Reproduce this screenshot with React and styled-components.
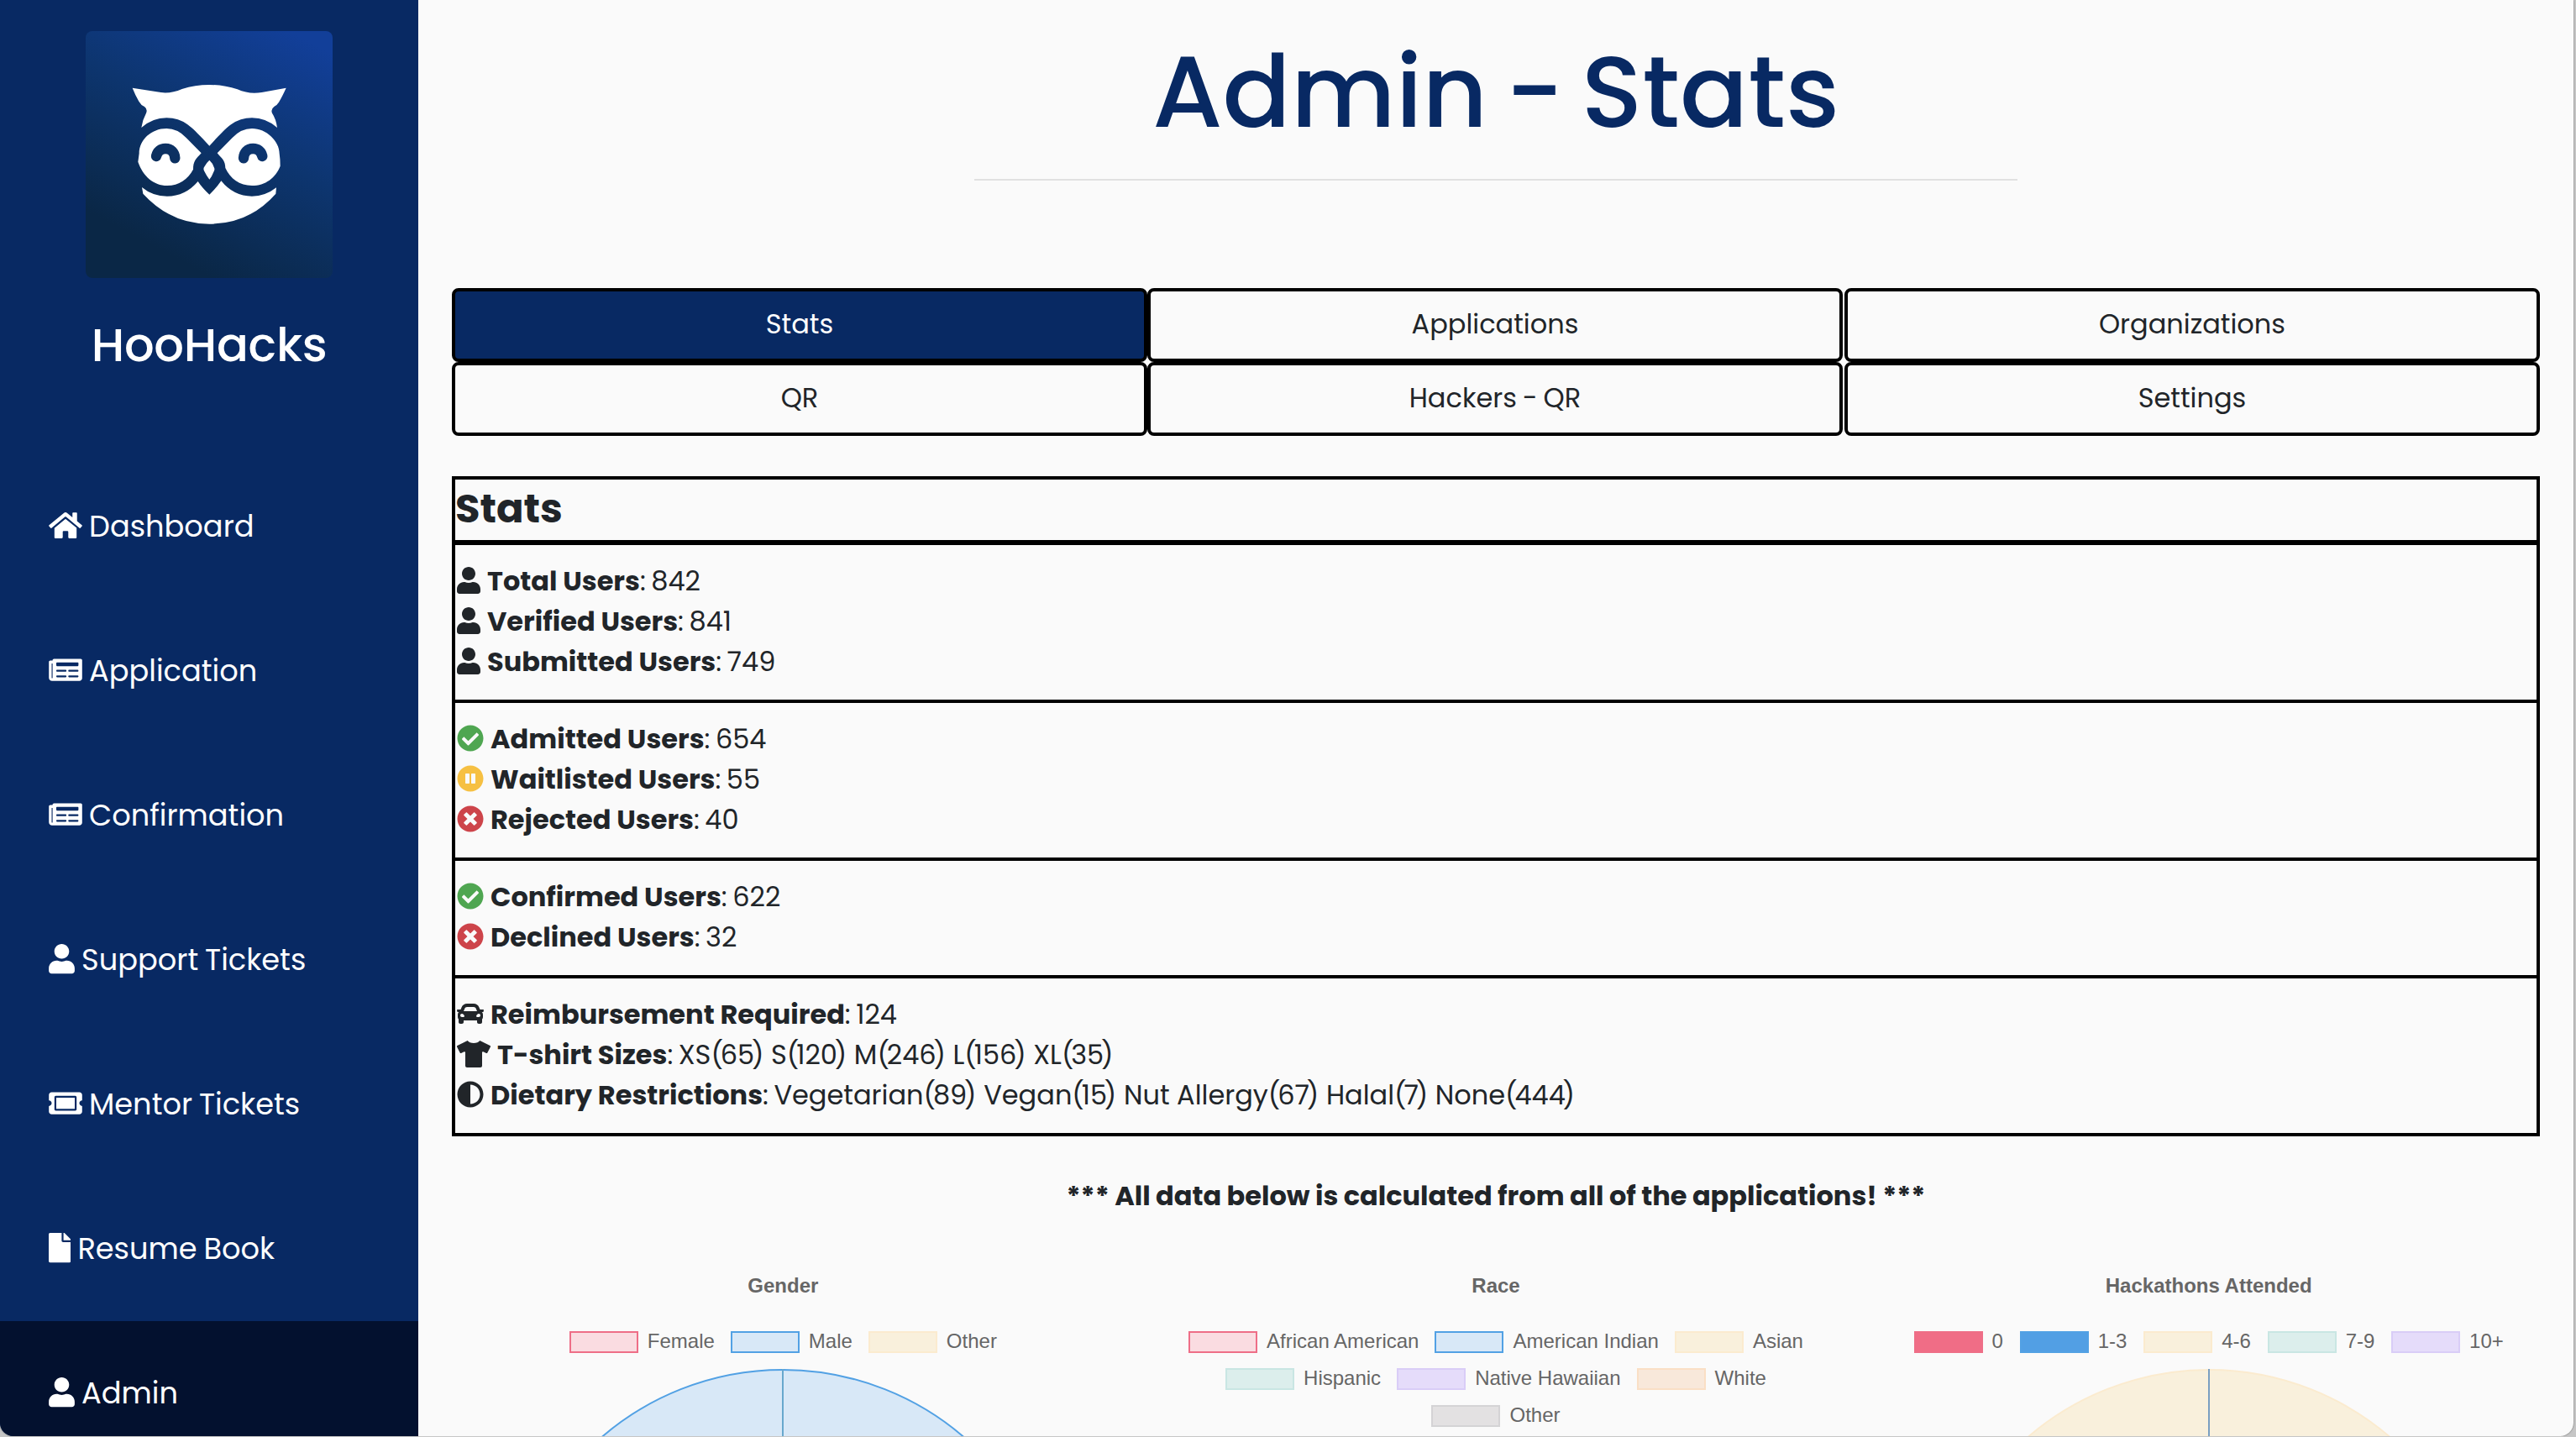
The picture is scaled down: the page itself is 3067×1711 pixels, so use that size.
import React from "react";
import styled, { createGlobalStyle } from "styled-components";
import {
  FaHome,
  FaNewspaper,
  FaUser,
  FaTicketAlt,
  FaFile,
  FaCheckCircle,
  FaPauseCircle,
  FaTimesCircle,
  FaCar,
  FaTshirt,
  FaAdjust,
} from "react-icons/fa";

const NAVY = "#082963";
const INK = "#212529";
const GREEN = "#4fa651";
const AMBER = "#f6c042";
const RED = "#cd444a";

const GlobalStyle = createGlobalStyle`
  *, *::before, *::after { box-sizing: border-box; }
  body {
    margin: 0;
    background: #c6c6c6;
    color: ${INK};
    font-family: Poppins, Inter, sans-serif;
  }
`;

const Window = styled.div`
  display: flex;
  width: 3064px;
  height: 1710px;
  overflow: hidden;
  background: #fafafa;
  border-radius: 0 0 16px 16px;
  box-shadow: 0 0 2px rgba(0, 0, 0, 0.55);
`;

const Sidebar = styled.aside`
  display: flex;
  flex-direction: column;
  flex: 0 0 498px;
  background: ${NAVY};
  color: #fff;
`;

const Brand = styled.div`
  display: flex;
  flex-direction: column;
  align-items: center;
  flex: 0 0 541px;
  padding-top: 37px;
`;

const LogoTile = styled.div`
  width: 294px;
  height: 294px;
  border-radius: 8px;
  overflow: hidden;
  background: linear-gradient(28deg, #0a2746 18%, #0d356f 58%, #123f99 94%);
`;

const BrandName = styled.div`
  margin-top: 46px;
  font-size: 56px;
  line-height: 68px;
  font-weight: 500;
  letter-spacing: -0.3px;
`;

const NavItem = styled.a`
  display: flex;
  align-items: center;
  gap: 8px;
  flex: 0 0 172px;
  padding-left: 58px;
  font-size: 35.2px;
  line-height: 52px;
  word-spacing: -1.5px;
  background: ${(p) => (p.$active ? "#03112f" : "transparent")};
`;

const Glyph = styled.span`
  display: flex;
  margin-top: -2px;
  color: ${(p) => p.$color || "inherit"};
  svg {
    display: block;
    height: ${(p) => p.$size}px;
    width: ${(p) => p.$width}px;
  }
`;

const Main = styled.main`
  flex: 1;
  min-width: 0;
  height: 1710px;
  overflow: hidden;
  padding: 39px 40px 0;
`;

const Title = styled.h1`
  margin: 0;
  text-align: center;
  color: ${NAVY};
  font-size: 120px;
  line-height: 140px;
  font-weight: 500;
  word-spacing: -10.5px;
`;

const Rule = styled.hr`
  width: 1242px;
  height: 2px;
  margin: 34px auto 128px;
  border: 0;
  background: #e1e1e1;
`;

const Tabs = styled.nav`
  display: grid;
  grid-template-columns: 828px 830px 828px;
  margin-bottom: 48px;
`;

const Tab = styled.button`
  width: 828px;
  height: 88px;
  padding: 0 0 2px;
  border: 4px solid #000;
  border-radius: 8px;
  background: ${(p) => (p.$active ? NAVY : "#fafafa")};
  color: ${(p) => (p.$active ? "#fff" : INK)};
  font: inherit;
  font-size: 32px;
  line-height: 48px;
  word-spacing: -1.5px;
`;

const Panel = styled.section`
  border: 4px solid #000;
`;

const PanelTitle = styled.h2`
  height: 78px;
  margin: 0;
  border-bottom: 6px solid #000;
  font-size: 48px;
  line-height: 70px;
  font-weight: 700;
`;

const Group = styled.div`
  padding: 19px 0 21px 2px;
  & + & {
    border-top: 4px solid #000;
  }
`;

const Stat = styled.div`
  display: flex;
  align-items: center;
  gap: 8px;
  height: 48px;
  font-size: 32px;
  line-height: 48px;
`;

const Separator = styled.span`
  word-spacing: -2px;
`;

const OpenParen = styled.span`
  margin-right: -3.2px;
`;

const CloseParen = styled.span`
  margin-left: -3.2px;
`;

const Note = styled.p`
  margin: 47px 0 69px;
  text-align: center;
  font-size: 32px;
  line-height: 48px;
  font-weight: 700;
  word-spacing: -0.4px;
`;

const Charts = styled.div`
  display: grid;
  grid-template-columns: repeat(3, 1fr);
  margin: 0 -30px;
  font-family: "Helvetica Neue", "Liberation Sans", Arial, sans-serif;
  font-size: 24px;
  color: #666;
`;

const Chart = styled.figure`
  display: flex;
  flex-direction: column;
  align-items: center;
  margin: 0;
`;

const ChartTitle = styled.figcaption`
  margin-bottom: 40px;
  line-height: 28px;
  font-weight: 700;
`;

const Legend = styled.div`
  display: flex;
  flex-direction: column;
  gap: 18px;
  margin-bottom: 19px;
`;

const LegendRow = styled.div`
  display: flex;
  justify-content: center;
  gap: ${(p) => p.$gap || 19}px;
  height: 26px;
`;

const LegendItem = styled.div`
  display: flex;
  gap: 11px;
  line-height: 24px;
`;

const Swatch = styled.span`
  width: 82px;
  height: 26px;
  background: ${(p) => p.$fill};
  border: 2px solid ${(p) => p.$line};
`;

const PieSvg = styled.svg`
  display: block;
`;

const C = {
  pink: ["#fadce1", "#ee6e87"],
  blue: ["#d8e8f7", "#52a1e4"],
  yellow: ["#f9f0dc", "#fbebcf"],
  teal: ["#dceeec", "#c9e6e3"],
  purple: ["#e5dcfa", "#d9cdf7"],
  orange: ["#f8e8da", "#fadfc5"],
  gray: ["#e3e1e2", "#d4d3d5"],
  solidPink: ["#f06d86", "#ee6e87"],
  solidBlue: ["#529fe4", "#52a1e4"],
};

const navItems = [
  { label: "Dashboard", Icon: FaHome, width: 40 },
  { label: "Application", Icon: FaNewspaper, width: 40 },
  { label: "Confirmation", Icon: FaNewspaper, width: 40 },
  { label: "Support Tickets", Icon: FaUser, width: 31 },
  { label: "Mentor Tickets", Icon: FaTicketAlt, width: 40 },
  { label: "Resume Book", Icon: FaFile, width: 26.4 },
  { label: "Admin", Icon: FaUser, width: 31, active: true },
];

const tabs = [
  { label: "Stats", active: true },
  { label: "Applications" },
  { label: "Organizations" },
  { label: "QR" },
  { label: "Hackers - QR" },
  { label: "Settings" },
];

const groups = [
  [
    { Icon: FaUser, width: 28, label: "Total Users", value: "842" },
    { Icon: FaUser, width: 28, label: "Verified Users", value: "841" },
    { Icon: FaUser, width: 28, label: "Submitted Users", value: "749" },
  ],
  [
    { Icon: FaCheckCircle, color: GREEN, width: 32, label: "Admitted Users", value: "654" },
    { Icon: FaPauseCircle, color: AMBER, width: 32, label: "Waitlisted Users", value: "55" },
    { Icon: FaTimesCircle, color: RED, width: 32, label: "Rejected Users", value: "40" },
  ],
  [
    { Icon: FaCheckCircle, color: GREEN, width: 32, label: "Confirmed Users", value: "622" },
    { Icon: FaTimesCircle, color: RED, width: 32, label: "Declined Users", value: "32" },
  ],
  [
    { Icon: FaCar, width: 32, label: "Reimbursement Required", value: "124" },
    {
      Icon: FaTshirt,
      width: 40,
      label: "T-shirt Sizes",
      counts: [["XS", 65], ["S", 120], ["M", 246], ["L", 156], ["XL", 35]],
    },
    {
      Icon: FaAdjust,
      width: 32,
      label: "Dietary Restrictions",
      counts: [["Vegetarian", 89], ["Vegan", 15], ["Nut Allergy", 67], ["Halal", 7], ["None", 444]],
    },
  ],
];

const charts = [
  {
    title: "Gender",
    rows: [[["Female", C.pink], ["Male", C.blue], ["Other", C.yellow]]],
    pie: { colors: C.blue, radiusLine: "#68a8cd" },
  },
  {
    title: "Race",
    rows: [
      [["African American", C.pink], ["American Indian", C.blue], ["Asian", C.yellow]],
      [["Hispanic", C.teal], ["Native Hawaiian", C.purple], ["White", C.orange]],
      [["Other", C.gray]],
    ],
    pie: { colors: C.blue, radiusLine: "#68a8cd" },
  },
  {
    title: "Hackathons Attended",
    gap: 19.8,
    rows: [
      [["0", C.solidPink], ["1-3", C.solidBlue], ["4-6", C.yellow], ["7-9", C.teal], ["10+", C.purple]],
    ],
    pie: { colors: C.yellow, radiusLine: "#7a9fc2" },
  },
];

function Owl() {
  return (
    <svg width="294" height="294" viewBox="306 111 882 882" aria-hidden="true">
      <mask id="smile" maskUnits="userSpaceOnUse" x="306" y="111" width="882" height="882">
        <rect x="306" y="111" width="882" height="882" fill="#fff" />
        <g fill="none" stroke="#000" strokeWidth="37" strokeLinecap="round">
          <path d="M558 558C562 541 574 531 591 531C611 531 624 545 625 565" />
          <path d="M937 558C933 541 921 531 904 531C884 531 871 545 870 565" />
        </g>
      </mask>
      <g fill="#fff">
        <path d="M473 314L560 328Q605 338 650 318Q697 303 747 303Q800 303 848 319Q890 338 935 330L1022 314Q1008 345 996 365Q990 375 980 380Q966 390 972 404Q986 425 990 456Q950 421 900 421Q858 421 825 445C803 461 780 487 748 521C716 487 692 461 670 445Q638 421 595 421Q545 421 505 456Q508 430 522 404Q528 390 516 381Q503 375 496 362Q484 342 473 314Z" />
        <g mask="url(#smile)">
          <path d="M719 547L665 492Q634 459 595 459C540 459 497 500 497 548L493 578C510 628 548 663 597 663C640 663 671 640 690 605C690 575 700 568 719 547Z" />
          <path d="M776 547L830 492Q861 459 900 459C952 459 998 505 998 548Q1001 568 1001 593C985 635 948 663 900 663C856 663 822 638 805 600C804 573 794 568 776 547Z" />
        </g>
        <path d="M748 572Q760 583 764 597Q769 605 763 614Q757 630 748 641Q736 625 730 612Q724 602 731 594Q738 581 748 572Z" />
        <path d="M507 669Q545 701 597 701Q662 701 707 648Q722 671 748 695Q772 673 790 646Q834 701 900 701Q948 701 987 670L985 692Q890 800 748 800Q610 800 511 692Z" />
      </g>
    </svg>
  );
}

function Count({ name, total }) {
  return (
    <>
      {name}
      <OpenParen>(</OpenParen>
      {total}
      <CloseParen>)</CloseParen>{" "}
    </>
  );
}

function Pie({ colors, radiusLine }) {
  return (
    <PieSvg width="662" height="662" viewBox="0 0 662 662">
      <circle cx="331" cy="331" r="330" fill={colors[0]} stroke={colors[1]} strokeWidth="2" />
      <path d="M331 0V331" stroke={radiusLine} strokeWidth="2" />
    </PieSvg>
  );
}

export default function App() {
  return (
    <>
      <GlobalStyle />
      <Window>
        <Sidebar>
          <Brand>
            <LogoTile>
              <Owl />
            </LogoTile>
            <BrandName>HooHacks</BrandName>
          </Brand>
          {navItems.map(({ label, Icon, width, active }) => (
            <NavItem key={label} $active={active}>
              <Glyph $size={35.2} $width={width}>
                <Icon />
              </Glyph>
              <span>{label}</span>
            </NavItem>
          ))}
        </Sidebar>
        <Main>
          <Title>Admin - Stats</Title>
          <Rule />
          <Tabs>
            {tabs.map(({ label, active }) => (
              <Tab key={label} $active={active}>
                {label}
              </Tab>
            ))}
          </Tabs>
          <Panel>
            <PanelTitle>Stats</PanelTitle>
            {groups.map((rows, i) => (
              <Group key={i}>
                {rows.map(({ Icon, color, width, label, value, counts }) => (
                  <Stat key={label}>
                    <Glyph $size={32} $width={width} $color={color}>
                      <Icon />
                    </Glyph>
                    <span>
                      <b>{label}</b>
                      <Separator>: </Separator>
                      {value}
                      {counts && counts.map(([name, total]) => <Count key={name} name={name} total={total} />)}
                    </span>
                  </Stat>
                ))}
              </Group>
            ))}
          </Panel>
          <Note>*** All data below is calculated from all of the applications! ***</Note>
          <Charts>
            {charts.map(({ title, rows, pie, gap }) => (
              <Chart key={title}>
                <ChartTitle>{title}</ChartTitle>
                <Legend>
                  {rows.map((row, i) => (
                    <LegendRow key={i} $gap={gap}>
                      {row.map(([label, [fill, line]]) => (
                        <LegendItem key={label}>
                          <Swatch $fill={fill} $line={line} />
                          {label}
                        </LegendItem>
                      ))}
                    </LegendRow>
                  ))}
                </Legend>
                <Pie {...pie} />
              </Chart>
            ))}
          </Charts>
        </Main>
      </Window>
    </>
  );
}
